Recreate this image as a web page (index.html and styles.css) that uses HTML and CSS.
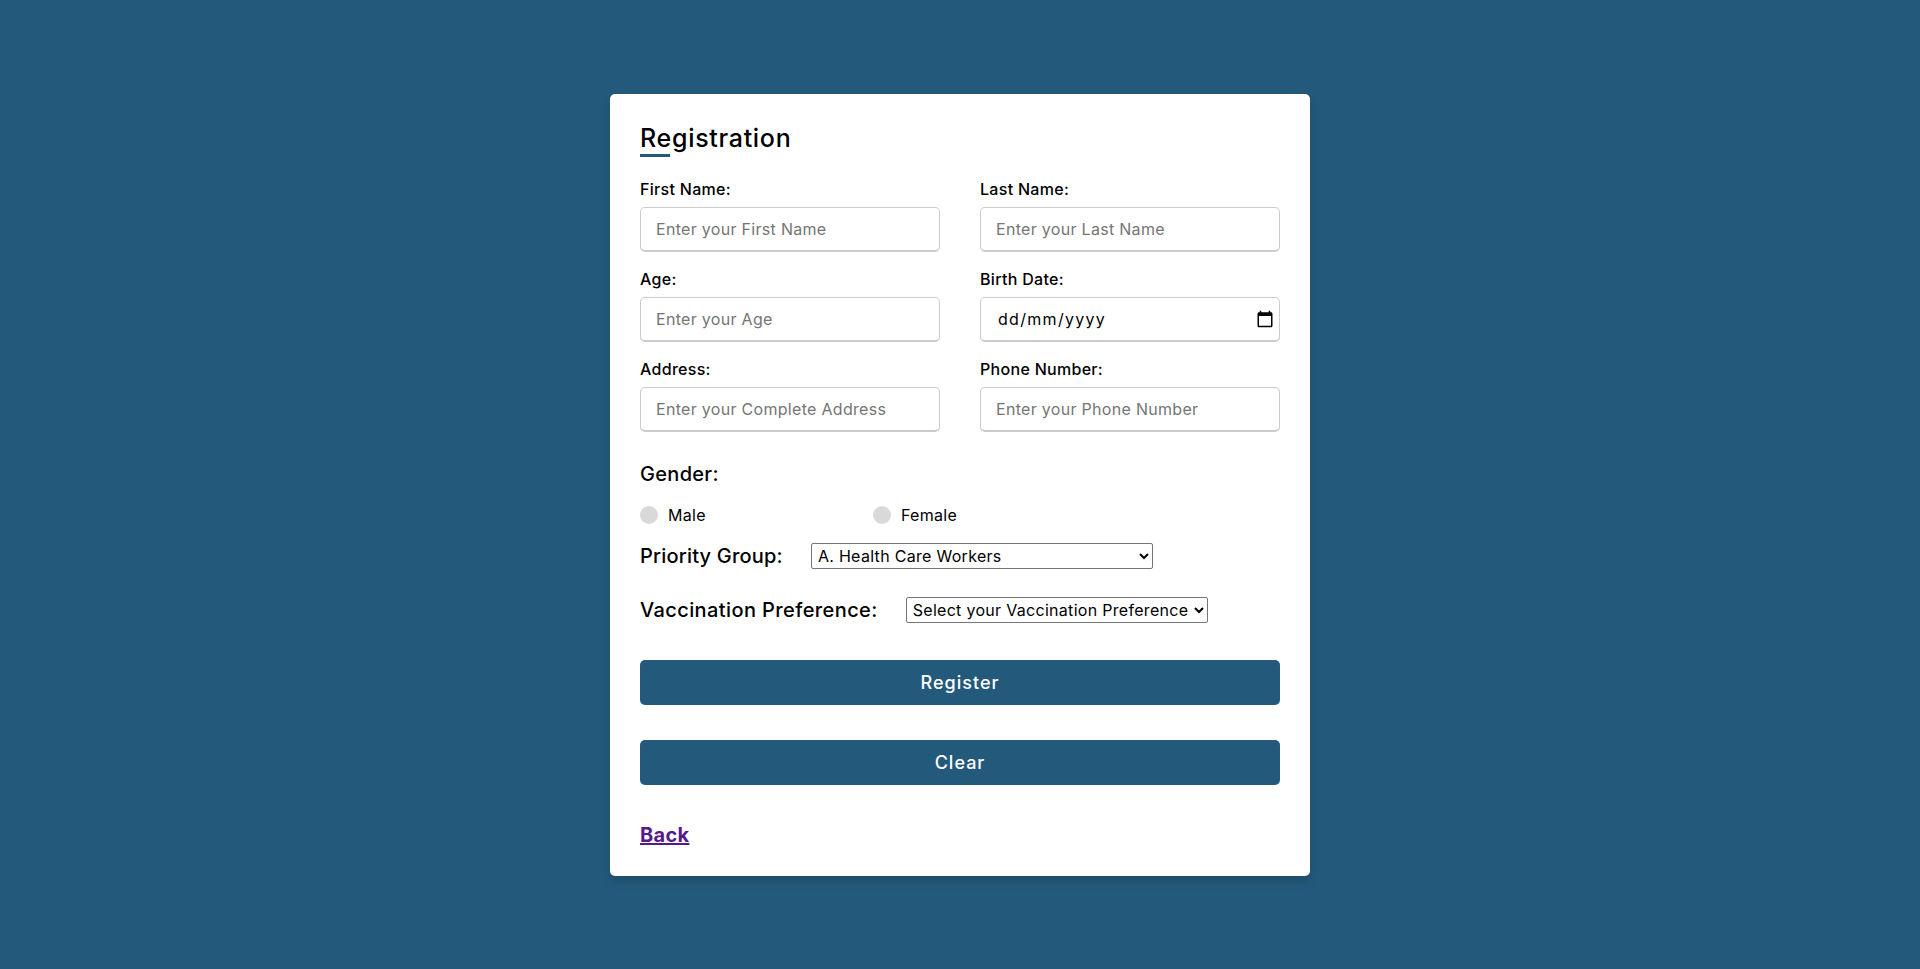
FILE: index.html
```html
<!DOCTYPE html>
<html lang="en">
<head>
<meta charset="UTF-8">
<title>Registration</title>
<link rel="stylesheet" href="styles.css">
</head>
<body>
<div class="container">
  <div class="title">Registration</div>
  <form class="form" action="#">
    <div class="user-details">
      <div class="input-box">
        <span class="details">First Name:</span>
        <input type="text" placeholder="Enter your First Name">
      </div>
      <div class="input-box">
        <span class="details">Last Name:</span>
        <input type="text" placeholder="Enter your Last Name">
      </div>
      <div class="input-box">
        <span class="details">Age:</span>
        <input type="text" placeholder="Enter your Age">
      </div>
      <div class="input-box">
        <span class="details">Birth Date:</span>
        <div class="date-field">
          <input type="text" class="date-input" placeholder="dd/mm/yyyy">
          <svg class="calendar-icon" viewBox="0 0 24 24" width="18" height="18" aria-hidden="true">
            <path d="M20 3h-1V1h-2v2H7V1H5v2H4c-1.1 0-2 .9-2 2v16c0 1.1.9 2 2 2h16c1.1 0 2-.9 2-2V5c0-1.1-.9-2-2-2zm0 18H4V8h16v13z" fill="#000"/>
          </svg>
        </div>
      </div>
      <div class="input-box">
        <span class="details">Address:</span>
        <input type="text" placeholder="Enter your Complete Address">
      </div>
      <div class="input-box">
        <span class="details">Phone Number:</span>
        <input type="text" placeholder="Enter your Phone Number">
      </div>
    </div>
    <div class="gender-details">
      <div class="gender-title">Gender:</div>
      <div class="category">
        <label class="option"><span class="dot"></span><span class="gender">Male</span></label>
        <label class="option"><span class="dot"></span><span class="gender">Female</span></label>
      </div>
    </div>
    <div class="select-row priority">
      <span class="select-title">Priority Group:</span>
      <select class="select priority-select">
        <option>A. Health Care Workers</option>
        <option>B. Senior Citizens</option>
        <option>C. Persons with Comorbidities</option>
        <option>D. Frontline Personnel in Essential Sectors</option>
      </select>
    </div>
    <div class="select-row vaccine">
      <span class="select-title">Vaccination Preference:</span>
      <select class="select vaccine-select">
        <option>Select your Vaccination Preference</option>
        <option>Pfizer</option>
        <option>Moderna</option>
        <option>AstraZeneca</option>
      </select>
    </div>
    <div class="button"><input type="submit" value="Register"></div>
    <div class="button"><input type="reset" value="Clear"></div>
    <div class="back-row"><a class="back" href="#">Back</a></div>
  </form>
</div>
</body>
</html>
```

FILE: styles.css
```css
* {
  margin: 0;
  padding: 0;
  box-sizing: border-box;
}

body {
  height: 100vh;
  display: flex;
  justify-content: center;
  align-items: center;
  background: #235a7b;
  font-family: Inter, "Noto Sans", sans-serif;
  color: #000;
  letter-spacing: 0.3px;
}

.container {
  width: 700px;
  background: #fff;
  padding: 25px 30px;
  border-radius: 5px;
  box-shadow: 0 5px 10px rgba(0, 0, 0, 0.15);
}

.title {
  position: relative;
  font-size: 25px;
  font-weight: 500;
  line-height: 38px;
  letter-spacing: 0.7px;
}

.title::before {
  content: "";
  position: absolute;
  left: 0;
  bottom: 0;
  width: 30px;
  height: 3px;
  background: #235a7b;
}

.user-details {
  display: flex;
  flex-wrap: wrap;
  justify-content: space-between;
  margin: 20px 0 12px 0;
}

.input-box {
  width: calc(100% / 2 - 20px);
  margin-bottom: 15px;
}

.details {
  display: block;
  font-size: 16px;
  font-weight: 500;
  line-height: 24px;
  margin-bottom: 6px;
}

.input-box input {
  display: block;
  width: 100%;
  height: 45px;
  font-family: inherit;
  font-size: 16px;
  letter-spacing: 0.3px;
  color: #000;
  border: 1px solid #ccc;
  border-bottom-width: 2px;
  border-radius: 5px;
  padding: 0 10px 0 15px;
  outline: none;
  background: #fff;
}

.input-box input::placeholder {
  color: #757575;
}

.date-field {
  position: relative;
}

.input-box .date-input {
  padding-left: 17px;
}

.input-box .date-input::placeholder {
  color: #000;
  letter-spacing: 1.3px;
}

.calendar-icon {
  position: absolute;
  right: 6px;
  top: 13px;
  pointer-events: none;
}

.gender-title {
  font-size: 20px;
  font-weight: 500;
  line-height: 30px;
}

.category {
  display: grid;
  grid-template-columns: 233px auto;
  margin: 14px 0;
}

.option {
  display: flex;
  align-items: center;
  font-size: 16px;
  line-height: 24px;
}

.dot {
  width: 18px;
  height: 18px;
  border-radius: 50%;
  background: #d9d9d9;
  margin-right: 10px;
}

.select-row {
  display: flex;
  align-items: center;
  height: 30px;
}

.select-row.vaccine {
  margin-top: 24px;
}

.select-title {
  font-size: 20px;
  font-weight: 500;
  line-height: 30px;
  letter-spacing: 0.4px;
  margin-right: 28px;
}

.priority .select-title {
  letter-spacing: 0.2px;
}

.select {
  height: 26px;
  font-family: inherit;
  font-size: 16px;
  letter-spacing: 0.3px;
  color: #000;
  background: #fff;
  border: 1px solid #767676;
  border-radius: 2px;
  padding: 0 2px;
}

.priority-select {
  width: 342px;
}

.vaccine-select {
  width: 302px;
}

.button {
  height: 45px;
  margin: 35px 0;
}

.button input {
  width: 100%;
  height: 100%;
  border: none;
  border-radius: 5px;
  background: #235a7b;
  color: #fff;
  font-family: inherit;
  font-size: 18px;
  font-weight: 500;
  letter-spacing: 1px;
  cursor: pointer;
}

.back-row {
  line-height: 30px;
}

.back {
  font-size: 20px;
  font-weight: 700;
  color: #551a8b;
  text-decoration: underline;
}
```
